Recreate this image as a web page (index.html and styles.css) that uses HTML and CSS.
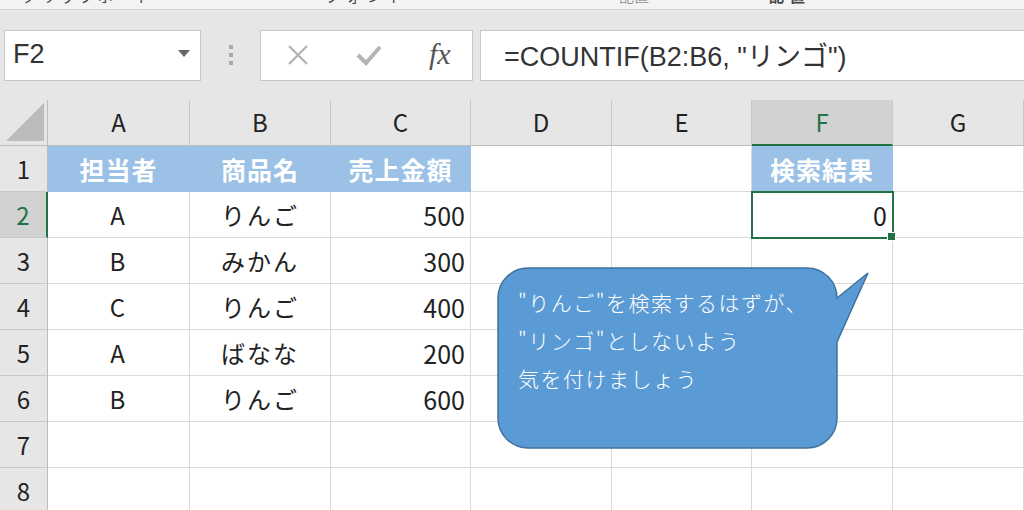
FILE: index.html
```html
<!DOCTYPE html>
<html lang="ja">
<head>
  <meta charset="UTF-8" />
  <title>COUNTIF</title>
  <link rel="stylesheet" href="styles.css">
</head>
<body>

  <div class="ribbon">
    <span class="grp g1">クリップボード</span>
    <span class="grp g2">フォント</span>
    <span class="grp g3">配置</span>
    <span class="grp g4">配置</span>
  </div>

  <!-- formula bar -->
  <div class="fbar">
    <div class="namebox">
      <span>F2</span>
      <span class="caret"></span>
    </div>
    <div class="dots"><i></i><i></i><i></i></div>
    <div class="fbtns">
      <svg class="ic" width="26" height="26" viewBox="0 0 26 26"><path d="M4 4 L22 22 M22 4 L4 22" stroke="#b4b4b4" stroke-width="2.4" fill="none"/></svg>
      <svg class="ic" width="28" height="26" viewBox="0 0 28 26"><path d="M3 13 L11 21 L25 5" stroke="#b4b4b4" stroke-width="4" fill="none"/></svg>
      <span class="fx">fx</span>
    </div>
    <div class="finput">=COUNTIF(B2:B6, "リンゴ")</div>
  </div>

  <!-- sheet -->
  <div class="sheet">
    <div class="corner"></div>
    <div class="ch">A</div><div class="ch">B</div><div class="ch">C</div><div class="ch">D</div><div class="ch">E</div><div class="ch sel">F</div><div class="ch">G</div>

    <div class="rh">1</div>
    <div class="c head">担当者</div><div class="c head">商品名</div><div class="c head">売上金額</div><div class="c"></div><div class="c"></div><div class="c head">検索結果</div><div class="c"></div>

    <div class="rh sel">2</div>
    <div class="c mid">A</div><div class="c mid">りんご</div><div class="c num">500</div><div class="c"></div><div class="c"></div><div class="c num active">0</div><div class="c"></div>

    <div class="rh">3</div>
    <div class="c mid">B</div><div class="c mid">みかん</div><div class="c num">300</div><div class="c"></div><div class="c"></div><div class="c"></div><div class="c"></div>

    <div class="rh">4</div>
    <div class="c mid">C</div><div class="c mid">りんご</div><div class="c num">400</div><div class="c"></div><div class="c"></div><div class="c"></div><div class="c"></div>

    <div class="rh">5</div>
    <div class="c mid">A</div><div class="c mid">ばなな</div><div class="c num">200</div><div class="c"></div><div class="c"></div><div class="c"></div><div class="c"></div>

    <div class="rh">6</div>
    <div class="c mid">B</div><div class="c mid">りんご</div><div class="c num">600</div><div class="c"></div><div class="c"></div><div class="c"></div><div class="c"></div>

    <div class="rh">7</div>
    <div class="c"></div><div class="c"></div><div class="c"></div><div class="c"></div><div class="c"></div><div class="c"></div><div class="c"></div>

    <div class="rh">8</div>
    <div class="c"></div><div class="c"></div><div class="c"></div><div class="c"></div><div class="c"></div><div class="c"></div><div class="c"></div>
  </div>

  <!-- callout shape -->
  <div class="callout">
    <svg class="bubble" width="376" height="186" viewBox="0 0 376 186">
      <path d="M31 1 H310 A30 30 0 0 1 340 31 L371 6 L340 75 V151 A30 30 0 0 1 310 181 H31 A30 30 0 0 1 1 151 V31 A30 30 0 0 1 31 1 Z"
            fill="#5b9bd5" stroke="#41719c" stroke-width="1.5"/>
    </svg>
    <div class="ctext">
      <div>"りんご"を検索するはずが、</div>
      <div>"リンゴ"としないよう</div>
      <div>気を付けましょう</div>
    </div>
  </div>

</body>
</html>
```

FILE: styles.css
```css
* { box-sizing: border-box; margin: 0; padding: 0; }
body {
  width: 1024px;
  height: 510px;
  overflow: hidden;
  position: relative;
  background: #fff;
  font-family: "Noto Sans CJK JP", "Noto Sans", sans-serif;
  color: #222;
}

/* ribbon leftovers, only the bottom of the labels shows */
.ribbon {
  height: 10px;
  background: #f3f3f3;
  border-bottom: 1px solid #d2d2d2;
  overflow: hidden;
  display: flex;
  align-items: flex-start;
}
.grp { font-size: 15px; color: #444; line-height: 15px; margin-top: -12px; white-space: nowrap; }
.g1 { margin-left: 22px; letter-spacing: 4px; }
.g2 { margin-left: 170px; letter-spacing: 6px; }
.g3 { margin-left: 210px; opacity: .5; }
.g4 { margin-left: 120px; font-weight: bold; letter-spacing: 6px; }

/* formula bar */
.fbar {
  height: 90px;
  background: #e6e6e6;
  display: flex;
  align-items: center;
  padding: 0 0 0 4px;
}
.namebox {
  width: 197px; height: 51px;
  background: #fff; border: 1px solid #c6c6c6;
  display: flex; align-items: center; justify-content: space-between;
  padding: 0 10px 2px 8px;
  font-family: "Liberation Sans", sans-serif;
  font-size: 27px; color: #333;
}
.caret {
  width: 0; height: 0;
  border-left: 6px solid transparent; border-right: 6px solid transparent;
  border-top: 7px solid #666;
  margin-top: -2px;
}
.dots { width: 59px; display: flex; flex-direction: column; align-items: center; gap: 4px; }
.dots i { display: block; width: 4px; height: 4px; background: #a8a8a8; }
.fbtns {
  width: 213px; height: 51px;
  background: #fff; border: 1px solid #c6c6c6;
  display: flex; align-items: center;
  padding-left: 24px; gap: 44px;
}
.fx {
  font-family: "Liberation Serif", serif;
  font-style: italic; font-size: 30px; color: #555;
  margin-left: 2px; margin-top: -2px;
}
.finput {
  flex: 1; height: 51px; margin-left: 7px;
  background: #fff; border: 1px solid #c6c6c6; border-right: none;
  padding: 4px 0 0 23px;
  font-family: "Liberation Sans", "Noto Sans CJK JP", sans-serif;
  font-size: 27px; color: #333;
}

/* grid */
.sheet {
  display: grid;
  grid-template-columns: 48px 142px 141px 140px 141px 140px 141px 131px;
  grid-auto-rows: 46px;
}
.corner {
  background: #e6e6e6;
  border-right: 1px solid #bdbdbd; border-bottom: 1px solid #bdbdbd;
  position: relative;
}
.corner::after {
  content: ""; position: absolute; right: 3px; bottom: 4px;
  border-left: 38px solid transparent; border-bottom: 38px solid #bcbcbc;
}
.ch, .rh {
  background: #e6e6e6;
  display: flex; align-items: center; justify-content: center;
  font-size: 24px; color: #222;
}
.ch { border-right: 1px solid #c8c8c8; border-bottom: 1px solid #bdbdbd; padding-bottom: 2px; }
.rh { border-right: 1px solid #bdbdbd; border-bottom: 1px solid #c8c8c8; }
.ch.sel { background: #d2d2d2; color: #217346; border-bottom: 2px solid #217346; }
.rh.sel { background: #d2d2d2; color: #217346; border-right: 2px solid #217346; }

.c {
  border-right: 1px solid #dadada; border-bottom: 1px solid #dadada;
  display: flex; align-items: center;
  font-size: 24px; color: #222;
}
.c.head {
  background: #9bc2e6; color: #fff; font-weight: bold;
  justify-content: center; font-size: 25px; letter-spacing: 1px;
  border-color: #9bc2e6;
}
.c.mid { justify-content: center; letter-spacing: 2px; }
.c.num { justify-content: flex-end; padding-right: 5px; font-size: 25px; }
.c.active {
  position: relative;
  outline: 2px solid #217346; outline-offset: -1px;
}
.c.active::after {
  content: ""; position: absolute; right: -4px; bottom: -4px;
  width: 7px; height: 7px; background: #217346; border: 1px solid #fff;
}

/* callout */
.callout { position: absolute; left: 497px; top: 267px; width: 376px; height: 186px; }
.bubble { position: absolute; left: 0; top: 0; }
.ctext {
  position: relative;
  padding: 16px 0 0 21px;
  color: #fff; font-size: 21px; font-weight: 300;
  line-height: 38px; letter-spacing: 1.5px;
}
```
